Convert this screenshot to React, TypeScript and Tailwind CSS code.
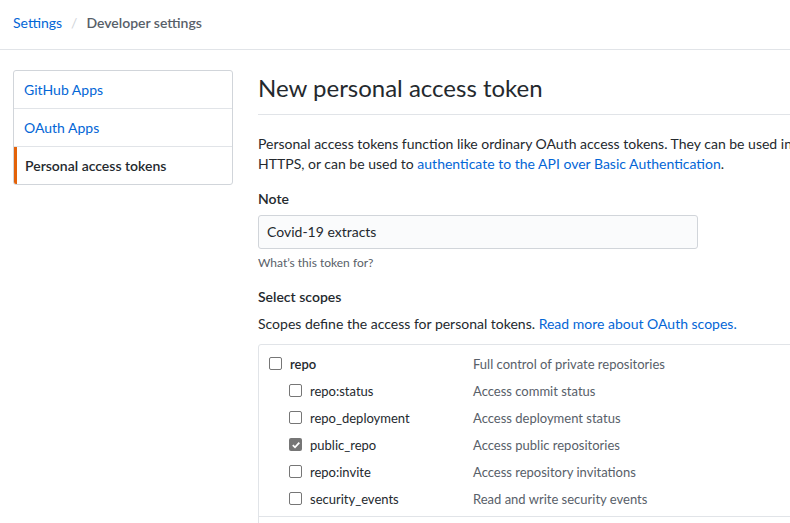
import React from "react";

const font = { fontFamily: 'Lato, "Segoe UI", Arial, sans-serif' };

function Box({ checked }: { checked?: boolean }) {
  if (checked) {
    return (
      <span className="inline-flex h-[13px] w-[13px] shrink-0 items-center justify-center rounded-[2px] bg-[#767676]">
        <svg width="10" height="10" viewBox="0 0 10 10">
          <path d="M1.8 5.2 L4 7.3 L8.3 2.6" fill="none" stroke="#fff" strokeWidth="1.8" />
        </svg>
      </span>
    );
  }
  return <span className="inline-block h-[13px] w-[13px] shrink-0 rounded-[2px] border border-[#767676] bg-white" />;
}

const rows = [
  { name: "repo", desc: "Full control of private repositories", top: true },
  { name: "repo:status", desc: "Access commit status" },
  { name: "repo_deployment", desc: "Access deployment status" },
  { name: "public_repo", desc: "Access public repositories", checked: true },
  { name: "repo:invite", desc: "Access repository invitations" },
  { name: "security_events", desc: "Read and write security events" },
];

export default function App() {
  return (
    <div className="h-[523px] w-[790px] overflow-hidden bg-white text-[14px] leading-[20px] text-[#24292e]" style={font}>
      <div className="flex h-[50px] items-center border-b border-[#e1e4e8] px-[13px] pb-[3px]">
        <span className="text-[#0366d6]">Settings</span>
        <span className="mx-[9px] text-[#d1d5da]">/</span>
        <span className="font-semibold text-[#586069]">Developer settings</span>
      </div>
      <div className="flex gap-[25px] pl-[13px] pt-[20px]">
        <div className="w-[220px] shrink-0">
          <div className="overflow-hidden rounded-[3px] border border-[#d1d5da]">
            <div className="flex h-[38px] items-center border-b border-[#e1e4e8] px-[10px] text-[#0366d6]">GitHub Apps</div>
            <div className="flex h-[38px] items-center border-b border-[#e1e4e8] px-[10px] text-[#0366d6]">OAuth Apps</div>
            <div className="flex h-[37px] items-center border-l-[3px] border-[#e36209] pl-[8px] font-semibold text-[#24292e]">Personal access tokens</div>
          </div>
        </div>
        <div className="w-[600px] shrink-0">
          <div className="border-b border-[#e1e4e8] pb-[8px]">
            <h2 className="text-[24px] font-normal leading-[36px]">New personal access token</h2>
          </div>
          <p className="mt-[19px] whitespace-nowrap">
            Personal access tokens function like ordinary OAuth access tokens. They can be used in
            <br />
            HTTPS, or can be used to <span className="text-[#0366d6]">authenticate to the API over Basic Authentication</span>.
          </p>
          <div className="mt-[15px] font-semibold">Note</div>
          <div className="mt-[6px] flex h-[34px] w-[440px] items-center rounded-[3px] border border-[#d1d5da] bg-[#fafbfc] px-[8px]">
            Covid-19 extracts
          </div>
          <div className="mt-[6px] text-[12px] leading-[16px] text-[#586069]">What’s this token for?</div>
          <div className="mt-[16px] font-semibold">Select scopes</div>
          <div className="mt-[7px] whitespace-nowrap">
            Scopes define the access for personal tokens. <span className="text-[#0366d6]">Read more about OAuth scopes.</span>
          </div>
          <div className="mt-[10px] rounded-tl-[3px] border border-[#e1e4e8] text-[13px]">
            <div className="border-b border-[#e1e4e8] pb-[4px] pl-[10px] pt-[5px]">
              {rows.map((r) => (
                <div key={r.name} className="flex h-[27px] items-center">
                  <div className={`flex w-[204px] items-center gap-[8px] ${r.top ? "" : "pl-[20px]"}`}>
                    <Box checked={r.checked} />
                    <span className={r.top ? "font-semibold" : ""}>{r.name}</span>
                  </div>
                  <span className="text-[#586069]">{r.desc}</span>
                </div>
              ))}
            </div>
            <div className="h-[40px]" />
          </div>
        </div>
      </div>
    </div>
  );
}
